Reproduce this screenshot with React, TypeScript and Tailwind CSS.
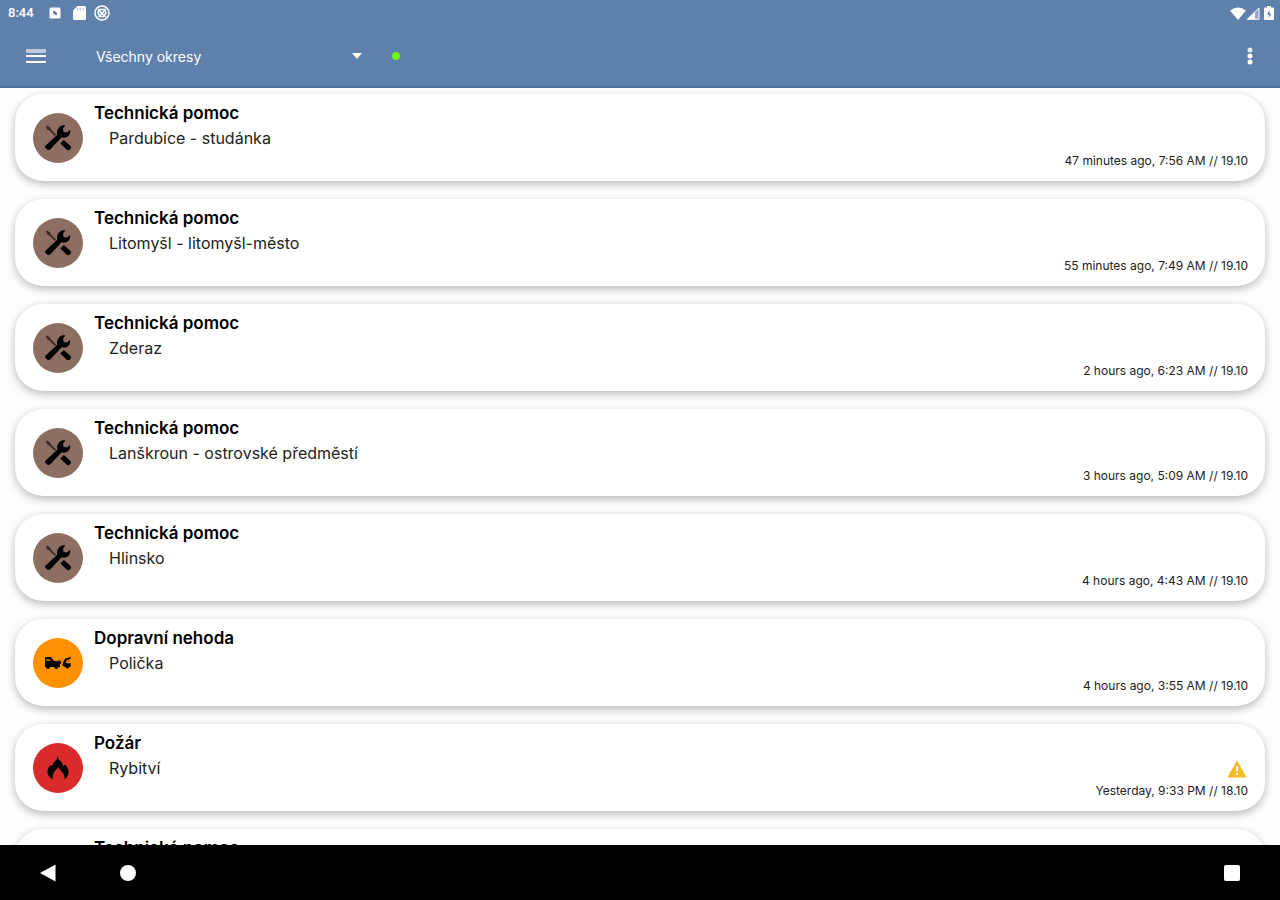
import { useState } from 'react'

type Kind = 'help' | 'crash' | 'fire'

type Incident = {
    id: number
    kind: Kind
    title: string
    place: string
    time: string
    warning?: boolean
}

const incidents: Incident[] = [
    { id: 1, kind: 'help', title: 'Technická pomoc', place: 'Pardubice - studánka', time: '47 minutes ago, 7:56 AM // 19.10' },
    { id: 2, kind: 'help', title: 'Technická pomoc', place: 'Litomyšl - litomyšl-město', time: '55 minutes ago, 7:49 AM // 19.10' },
    { id: 3, kind: 'help', title: 'Technická pomoc', place: 'Zderaz', time: '2 hours ago, 6:23 AM // 19.10' },
    { id: 4, kind: 'help', title: 'Technická pomoc', place: 'Lanškroun - ostrovské předměstí', time: '3 hours ago, 5:09 AM // 19.10' },
    { id: 5, kind: 'help', title: 'Technická pomoc', place: 'Hlinsko', time: '4 hours ago, 4:43 AM // 19.10' },
    { id: 6, kind: 'crash', title: 'Dopravní nehoda', place: 'Polička', time: '4 hours ago, 3:55 AM // 19.10' },
    { id: 7, kind: 'fire', title: 'Požár', place: 'Rybitví', time: 'Yesterday, 9:33 PM // 18.10', warning: true },
    { id: 8, kind: 'help', title: 'Technická pomoc', place: '', time: '' },
]

const kindColors: Record<Kind, string> = {
    help: 'bg-[#8d6e63]',
    crash: 'bg-[#ff9100]',
    fire: 'bg-[#d92b2b]',
}

const ToolsIcon = () => (
    <svg viewBox="0 0 26 26" className="size-[26px]" aria-hidden="true">
        <path d="M.8 1.4 2 .4l3.2 2 .6 1.8 5.4 5.6-1.3 1.3-5.6-5.5-1.6-.6z" fill="#3d2b26" />
        <path d="m15.300 18.600 3.500-3.500 6.500 5.700c1.100 1.100 1 2.300-.2 3.500-1.200 1.200-2.400 1.200-3.600.1z" />
        <path d="M.6 20.400 12.300 9.700C11.600 6.400 12.400 3.700 14.500 1.900 16.100.5 18.200 0 20.300.5L18 3.600l.6 3.300 3.400.6 3-2.600c.6 2.200-.1 4.600-1.800 6.100-1.900 1.700-4.300 2-6.600 1.300L5.400 24.300c-1 .9-2.500.9-3.500 0l-1.100-1.100c-.9-.9-.9-2-.2-2.800z" />
    </svg>
)

const CrashIcon = () => (
    <svg viewBox="0 0 26 14" className="h-[14px] w-[26px]" aria-hidden="true">
        <path d="M0 1h6l2.800 3.700 4.200.9 2 2V11h-1.700a2 2 0 0 1-4 0H5a2 2 0 0 1-4 0H0z" />
        <path d="M1.300 2.700h3l1.600 2.300H1.300z" fill="#a55d00" />
        <path d="m11.500 4.500 1.500 1.200 1-2.700.8 3 1.700-2-.9 4-1.300 1z" />
        <path d="m18 6.300 2.300-3.800L25.500 1l.5 1.500-4 1.400-1.500 2.600 2.300 1 2.700-.5.5 3.500-1.800.3a1.700 1.700 0 0 1-3.300.6l-3.500-2z" />
        <path d="m22 4.900 2.800-.9v1.600l-2.600.7z" fill="#a55d00" />
    </svg>
)

const FireIcon = () => (
    <svg viewBox="0 0 22 24" className="h-6 w-[22px]" aria-hidden="true">
        <path d="M10.500 0c.4 3.300 2.600 4.700 4.200 6.600.9 1.100 1.300 2.300 1.300 3.600.9-.3 1.500-1 1.700-1.800 2.500 2 3.900 4.700 3.900 7.400 0 3-1.400 5.600-4 7.400.2-3.300-.9-5.500-2.900-7.600-1.500-1.500-2.600-2.700-3-4.400-2.600 2-4.200 3.900-5.200 6-.9 1.900-1.100 4-.8 6.200C2.400 21.600.4 19 .4 15.800c0-2.900 1.300-5 3.500-6.900l1.300 1.400C5.300 6 10.300 5.200 10.500 0z" />
    </svg>
)

const KindIcon = ({ kind }: { kind: Kind }) => {
    if (kind === 'crash') return <CrashIcon />
    if (kind === 'fire') return <FireIcon />
    return <ToolsIcon />
}

const WarningIcon = () => (
    <svg viewBox="0 0 20 18" className="h-[18px] w-5" role="img" aria-label="Warning">
        <path d="M10 .5 19.700 17.500H.3z" fill="#fdb827" />
        <path d="M9 6.500h2v5H9zM9 13h2v2H9z" fill="#fff" />
    </svg>
)

const StatusBar = () => (
    <div className="flex h-[26px] items-center justify-between pl-2 pr-1.5 text-white">
        <div className="flex items-center">
            <span className="w-[41px] font-[Roboto,sans-serif] text-[13px] font-medium">8:44</span>
            <svg viewBox="0 0 12 12" className="size-3" aria-hidden="true">
                <rect x=".5" y=".5" width="11" height="11" rx="1.500" fill="#fff" />
                <path d="M4 4h2l2 2v2H6L4 6z" fill="#5f80ab" />
            </svg>
            <svg viewBox="0 0 13 14" className="ml-3 h-3.5 w-[13px]" aria-hidden="true">
                <path d="M4.500 0H11.500Q13 0 13 1.500v11Q13 14 11.500 14h-10Q0 14 0 12.500v-8z" fill="#fff" />
                <path d="M4.500 2v2.600M7.200 2v2.600M10 2v2.600" stroke="#a9bbd3" />
            </svg>
            <svg viewBox="0 0 16 16" className="ml-2 size-4" fill="none" stroke="#fff" strokeWidth="1.500" aria-hidden="true">
                <circle cx="8" cy="8" r="7" />
                <path d="M4 4.500 12 12M12 4 4.500 12M5 4.500h5.500L12 8l-2.500 3.500H6L4 8z" />
            </svg>
        </div>
        <div className="flex items-center">
            <svg viewBox="0 0 16 13" className="h-[13px] w-4" fill="#fff" aria-hidden="true">
                <path d="M0 3.500Q8-2.500 16 3.500L8 13z" />
            </svg>
            <svg viewBox="0 0 14 13" className="h-[13px] w-3.5" aria-hidden="true">
                <path d="M13 1v11.300H1.200z" fill="#8fa7c6" stroke="#fff" />
                <path d="M9 5v7H1.500z" fill="#fff" />
            </svg>
            <svg viewBox="0 0 10 14" className="ml-1 h-3.5 w-2.5" aria-hidden="true">
                <path d="M3 0h4v1.500h2q1 0 1 1V13q0 1-1 1H1q-1 0-1-1V2.500q0-1 1-1h2z" fill="#fff" />
                <path d="M5.500 4 3 8.500h1.700V12L7.200 7.400H5.500z" fill="#5f80ab" />
            </svg>
        </div>
    </div>
)

const Toolbar = () => {
    const [district, setDistrict] = useState('all')

    return (
        <div className="flex flex-1 items-center px-[26px] text-white">
            <button aria-label="Menu" className="flex w-[70px] items-center">
                <svg viewBox="0 0 20 16" className="h-4 w-5" aria-hidden="true">
                    <path d="M0 1h20v4H0z" fill="#bccadd" />
                    <path d="M0 7h20v2H0zM0 13h20v2H0z" fill="#fff" />
                </svg>
            </button>
            <div className="relative w-[266px]">
                <select
                    aria-label="Okres"
                    value={district}
                    onChange={(e) => setDistrict(e.target.value)}
                    className="w-full appearance-none bg-transparent text-sm outline-none"
                >
                    <option value="all">Všechny okresy</option>
                </select>
                <svg viewBox="0 0 10 6" className="pointer-events-none absolute right-0 top-1/2 h-1.5 w-2.5 -translate-y-1/2" aria-hidden="true">
                    <path d="M0 0h10L5 6z" fill="#fff" />
                </svg>
            </div>
            <span className="ml-[30px] size-2 rounded-full bg-[#6cf516]" />
            <button aria-label="More" className="ml-auto">
                <svg viewBox="0 0 8 18" className="h-[18px] w-2" fill="#fff" aria-hidden="true">
                    <circle cx="4" cy="3" r="2.500" opacity=".85" />
                    <circle cx="4" cy="9" r="2.500" />
                    <circle cx="4" cy="15" r="2.500" />
                </svg>
            </button>
        </div>
    )
}

const IncidentCard = ({ incident }: { incident: Incident }) => (
    <li className="flex min-h-[87px] shrink-0 rounded-[28px] bg-white pl-[18px] pr-[17px] shadow-[0_3px_9px_rgba(0,0,0,0.27)]">
        <div className={`flex size-[50px] shrink-0 items-center justify-center self-center rounded-full ${kindColors[incident.kind]}`}>
            <KindIcon kind={incident.kind} />
        </div>
        <div className="ml-[11px] flex-1 pt-1.5">
            <h2 className="text-[17px] font-semibold leading-[26px] text-black">{incident.title}</h2>
            <p className="pl-[15px] text-base leading-6 text-[#222]">{incident.place}</p>
        </div>
        <div className="flex flex-col items-end justify-end pb-3">
            {incident.warning && (
                <div className="mr-px pb-[5px]">
                    <WarningIcon />
                </div>
            )}
            <p className="text-xs text-[#222]">{incident.time}</p>
        </div>
    </li>
)

const NavBar = () => (
    <nav className="flex h-[55px] shrink-0 items-center bg-black pl-10 pr-10">
        <button aria-label="Back">
            <svg viewBox="0 0 16 18" className="h-[18px] w-4" fill="#fff" aria-hidden="true">
                <path d="M15.500.5v17L0 9z" />
            </svg>
        </button>
        <button aria-label="Home" className="ml-16 size-4 rounded-full bg-white" />
        <button aria-label="Recent apps" className="ml-auto size-4 rounded-xs bg-white" />
    </nav>
)

const App = () => {
    return (
        <div className="flex h-screen flex-col overflow-hidden bg-[#fdfdfd] font-[Inter,sans-serif]">
            <header className="flex h-[88px] shrink-0 flex-col border-b-2 border-[#4c719f] bg-[#5f80ab]">
                <StatusBar />
                <Toolbar />
            </header>
            <main className="min-h-0 flex-1 overflow-hidden">
                <ul className="flex flex-col gap-[18px] px-[15px] pt-1.5">
                    {incidents.map((incident) => (
                        <IncidentCard key={incident.id} incident={incident} />
                    ))}
                </ul>
            </main>
            <NavBar />
        </div>
    )
}

export default App
